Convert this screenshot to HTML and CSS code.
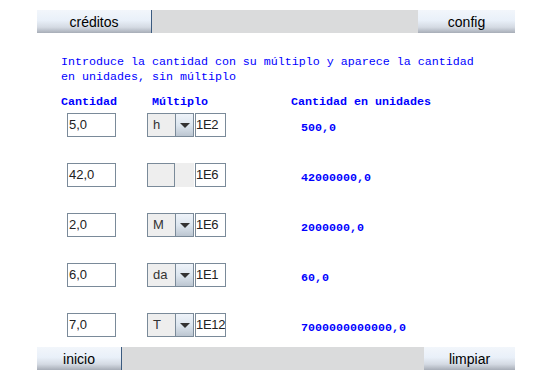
FILE: index.html
```html
<!DOCTYPE html>
<html lang="es">
<head>
<meta charset="utf-8">
<title>Múltiplos</title>
<link rel="stylesheet" href="styles.css">
</head>
<body>
<div class="page">
  <div class="bar top">
    <div class="btn btn-creditos">créditos</div>
    <div class="fill"></div>
    <div class="btn btn-config">config</div>
  </div>

  <p class="intro">Introduce la cantidad con su múltiplo y aparece la cantidad<br>en unidades, sin múltiplo</p>

  <div class="head">
    <span class="h1">Cantidad</span>
    <span class="h2">Múltiplo</span>
    <span class="h3">Cantidad en unidades</span>
  </div>

  <div class="rows">
    <div class="row">
      <div class="field qty">5,0</div>
      <div class="combo"><span class="sel">h</span><span class="arrow"><i></i></span></div>
      <div class="field exp">1E2</div>
      <div class="result">500,0</div>
    </div>
    <div class="row">
      <div class="field qty">42,0</div>
      <div class="combo empty"><span class="sel"></span><span class="arrow"></span></div>
      <div class="field exp">1E6</div>
      <div class="result">42000000,0</div>
    </div>
    <div class="row">
      <div class="field qty">2,0</div>
      <div class="combo"><span class="sel">M</span><span class="arrow"><i></i></span></div>
      <div class="field exp">1E6</div>
      <div class="result">2000000,0</div>
    </div>
    <div class="row">
      <div class="field qty">6,0</div>
      <div class="combo"><span class="sel">da</span><span class="arrow"><i></i></span></div>
      <div class="field exp">1E1</div>
      <div class="result">60,0</div>
    </div>
    <div class="row">
      <div class="field qty">7,0</div>
      <div class="combo"><span class="sel">T</span><span class="arrow"><i></i></span></div>
      <div class="field exp">1E12</div>
      <div class="result">7000000000000,0</div>
    </div>
  </div>

  <div class="bar bottom">
    <div class="btn btn-inicio">inicio</div>
    <div class="fill"></div>
    <div class="btn btn-limpiar">limpiar</div>
  </div>
</div>
</body>
</html>
```

FILE: styles.css
```css
html, body {
  margin: 0;
  padding: 0;
  background: #ffffff;
}
.page {
  width: 542px;
  height: 378px;
  padding-top: 10px;
  box-sizing: border-box;
}
.bar {
  display: flex;
  margin-left: 37px;
  width: 478px;
  height: 23px;
  background: #dadbdc;
}
.bar .fill { flex: 1; }
.btn {
  height: 23px;
  box-sizing: border-box;
  display: flex;
  align-items: center;
  justify-content: center;
  font-family: "Liberation Sans", Arial, sans-serif;
  font-size: 14px;
  color: #000;
  background: linear-gradient(to bottom, #f2f6fb 0%, #e9f0f9 45%, #d4dae3 75%, #a7adb7 100%);
}
.btn-creditos { width: 115px; border-right: 1px solid #3b5b80; }
.btn-config { width: 97px; }
.btn-inicio { width: 85px; border-right: 1px solid #3b5b80; }
.btn-limpiar { width: 91px; }

.intro {
  margin: 22px 0 0 61px;
  font-family: "Liberation Mono", "Courier New", monospace;
  font-size: 11.67px;
  line-height: 15px;
  color: #0000ff;
}
.head {
  height: 15px;
  margin-top: 10px;
  font-family: "Liberation Mono", "Courier New", monospace;
  font-size: 11.67px;
  line-height: 15px;
  font-weight: bold;
  color: #0000ff;
  display: flex;
}
.h1 { margin-left: 61px; width: 91px; }
.h2 { width: 139px; }

.rows {
  margin-top: 3px;
  padding-left: 67px;
  display: flex;
  flex-direction: column;
  gap: 26px;
}
.row {
  display: flex;
  align-items: center;
  height: 24px;
}
.field {
  height: 24px;
  box-sizing: border-box;
  border: 1px solid #7a8a99;
  background: #fff;
  font-family: "Liberation Sans", Arial, sans-serif;
  font-size: 13px;
  line-height: 22px;
  color: #222;
}
.qty { width: 49px; padding-left: 1px; }
.exp { width: 31px; margin-left: 1px; padding-left: 0; letter-spacing: -0.3px; }
.combo {
  margin-left: 31px;
  width: 47px;
  height: 24px;
  display: flex;
  box-sizing: border-box;
}
.combo .sel {
  width: 28px;
  height: 24px;
  box-sizing: border-box;
  border: 1px solid #7a8a99;
  border-right: none;
  background: #eeeeee;
  padding-left: 5px;
  font-family: "Liberation Sans", Arial, sans-serif;
  font-size: 13px;
  line-height: 22px;
  color: #333;
}
.combo .arrow {
  width: 19px;
  height: 24px;
  box-sizing: border-box;
  border: 1px solid #7a8a99;
  background: linear-gradient(to bottom, #eef3f9 0%, #dde6ef 50%, #bcc6d1 100%);
  display: flex;
  align-items: center;
  justify-content: center;
}
.combo .arrow i {
  display: block;
  width: 0;
  height: 0;
  border-left: 5px solid transparent;
  border-right: 5px solid transparent;
  border-top: 5px solid #333333;
}
.combo.empty .sel { border-right: 1px solid #7a8a99; }
.combo.empty .arrow {
  border: none;
  background: #eeeeee;
}
.result {
  margin-left: 75px;
  padding-top: 5px;
  font-family: "Liberation Mono", "Courier New", monospace;
  font-size: 11.67px;
  font-weight: bold;
  color: #0000ff;
}
.bar.bottom { margin-top: 10px; }
```
